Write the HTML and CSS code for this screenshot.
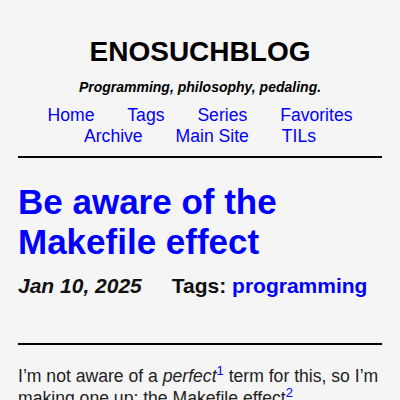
FILE: index.html
```html
<!DOCTYPE html>
<html>
<head>
<meta charset="utf-8">
<link rel="stylesheet" href="styles.css">
</head>
<body>
<header class="site-header">
  <h1 class="site-title">ENOSUCHBLOG</h1>
  <p class="tagline">Programming, philosophy, pedaling.</p>
  <nav class="site-nav">
    <a href="#">Home</a>
    <a href="#">Tags</a>
    <a href="#">Series</a>
    <a href="#">Favorites</a>
    <a href="#">Archive</a>
    <a href="#">Main Site</a>
    <a href="#">TILs</a>
  </nav>
</header>
<hr class="rule">
<article class="post">
  <h2 class="post-title"><a href="#">Be aware of the Makefile effect</a></h2>
  <div class="post-meta">
    <span class="post-date">Jan 10, 2025</span>
    <span class="post-tags">Tags: <a href="#">programming</a></span>
  </div>
  <hr class="rule rule-post">
  <p class="post-body">I’m not aware of a <em>perfect</em><sup><a href="#">1</a></sup> term for this, so I’m making one up: the Makefile effect<sup><a href="#">2</a></sup>.</p>
</article>
</body>
</html>
```
FILE: styles.css
```css
html { background: #f5f5f5; }
body {
  margin: 0;
  padding: 0 18px;
  font-family: "Liberation Sans", Arial, sans-serif;
  color: #222;
  background: #f5f5f5;
}
a { color: #0000ff; text-decoration: none; }
.site-header { text-align: center; padding-top: 34px; }
.site-title {
  margin: 0;
  font-size: 28px;
  line-height: 36px;
  font-weight: bold;
  color: #000;
}
.tagline {
  margin: 8px 0 0;
  font-size: 14px;
  line-height: 18px;
  font-weight: bold;
  font-style: italic;
  color: #000;
}
.site-nav {
  margin-top: 9px;
  font-size: 17.6px;
  line-height: 21px;
  padding: 0 10px;
}
.site-nav a { margin: 0 14px; }
.rule {
  border: 0;
  border-top: 2px solid #000;
  margin: 9px 0 0;
}
.post-title {
  margin: 24px 0 0;
  font-size: 35px;
  line-height: 40px;
  font-weight: bold;
}
.post-meta {
  margin-top: 12px;
  font-size: 21px;
  line-height: 24px;
  font-weight: bold;
  color: #111;
  display: flex;
  gap: 30px;
}
.post-date { font-style: italic; }
.rule-post { margin-top: 45px; }
.post-body {
  margin: 20px 0 0;
  font-size: 17.6px;
  line-height: 22px;
}
.post-body sup { font-size: 13px; line-height: 0; }
```
